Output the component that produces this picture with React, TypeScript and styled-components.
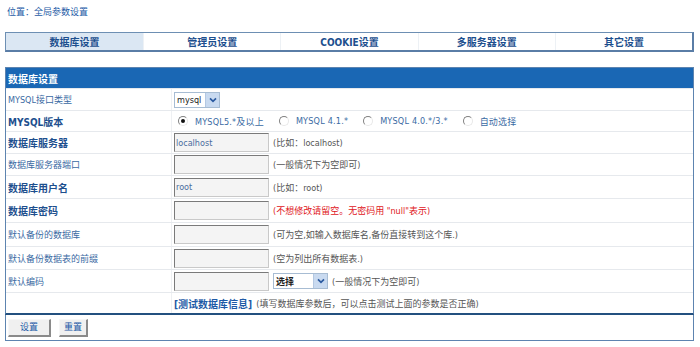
import React from "react";
import styled, { createGlobalStyle, css } from "styled-components";

const Global = createGlobalStyle`
  html, body { margin: 0; padding: 0; background: #fff; }
  body { font-family: "DejaVu Sans Condensed", "DejaVu Sans", "Noto Sans CJK SC", sans-serif; font-size: 9px; }
  * { box-sizing: border-box; }
`;

const Page = styled.div`
  width: 700px;
  padding: 0 6px 0 5px;
`;

const Location = styled.div`
  height: 32px;
  padding: 6px 0 0 2px;
  color: #1d5aa6;
  font-size: 9px;
  line-height: 12px;
`;

const Tabs = styled.div`
  display: grid;
  grid-template-columns: repeat(5, 1fr);
  height: 20px;
  border: 1px solid #6d8fb3;
  border-right-width: 2px;
  border-bottom-width: 2px;
  border-right-color: #5a7da6;
  border-bottom-color: #5a7da6;
`;

const Tab = styled.div<{ $active?: boolean }>`
  display: flex;
  align-items: center;
  justify-content: center;
  font-weight: bold;
  font-size: 10px;
  color: #1d4f8e;
  background: ${(p) => (p.$active ? "#dbe7f3" : "#fff")};
  border-left: 1px solid #edf1f5;
  &:first-child { border-left: none; }
`;

const Panel = styled.div`
  margin-top: 15px;
  border: 1px solid #5d84b0;
  border-bottom: 2px solid #23507f;
`;

const Header = styled.div`
  height: 20px;
  background: #1a67b4;
  color: #fff;
  font-weight: bold;
  font-size: 10px;
  display: flex;
  align-items: center;
  padding-left: 2px;
`;

const Row = styled.div<{ $h?: number }>`
  display: grid;
  grid-template-columns: 166px 1fr;
  height: ${(p) => p.$h ?? 22}px;
  border-top: 1px solid #e6e9ed;
  &:first-of-type { border-top: 1px solid #fff; }
`;

const Label = styled.div<{ $bold?: boolean }>`
  display: flex;
  align-items: center;
  padding-left: 2px;
  border-right: 1px solid #eef0f3;
  ${(p) =>
    p.$bold
      ? css`font-weight: bold; font-size: 10px; color: #1d4f8e;`
      : css`font-size: 9px; color: #3a6aa3;`}
`;

const Value = styled.div<{ $tight?: boolean }>`
  display: flex;
  align-items: center;
  padding-left: ${(p) => (p.$tight ? 6 : 2)}px;
  gap: ${(p) => (p.$tight ? 0 : 4)}px;
  color: #555;
`;

const TextInput = styled.input`
  width: 95px;
  height: 19px;
  border: 1px solid #c9c9c9;
  border-top-color: #7a7a7a;
  border-left-color: #7a7a7a;
  background: #f4f4f4;
  color: #4a6d9e;
  font-family: "DejaVu Sans Condensed", "DejaVu Sans", sans-serif;
  font-size: 9px;
  padding: 0 1px;
  outline: none;
`;

const Select = styled.div<{ $w: number; $bold?: boolean }>`
  width: ${(p) => p.$w}px;
  height: 16px;
  border: 1px solid #a7bcd3;
  display: flex;
  align-items: center;
  justify-content: space-between;
  padding-left: 2px;
  color: #222;
  font-size: 9px;
  font-weight: ${(p) => (p.$bold ? "bold" : "normal")};
  background: #fff;
`;

const SelectBtn = styled.span`
  width: 14px;
  height: 14px;
  background: #c9daf0;
  border-left: 1px solid #b4c8e2;
  display: flex;
  align-items: center;
  justify-content: center;
`;

const Radio = styled.span<{ $checked?: boolean }>`
  width: 10px;
  height: 10px;
  border-radius: 50%;
  border: 1px solid #808080;
  border-right-color: #e8e8e8;
  border-bottom-color: #e8e8e8;
  background: #fff;
  display: inline-flex;
  align-items: center;
  justify-content: center;
  margin: 0 7px 0 0;
  &::after {
    content: "";
    width: 4px;
    height: 4px;
    border-radius: 50%;
    background: ${(p) => (p.$checked ? "#111" : "transparent")};
  }
`;

const RadioLabel = styled.span`
  color: #3a6aa3;
  margin-right: 15px;
  letter-spacing: 0.2px;
`;

const Hint = styled.span<{ $red?: boolean }>`
  color: ${(p) => (p.$red ? "#e0161b" : "#555")};
`;

const TestLink = styled.span`
  color: #1d5aa6;
  font-weight: bold;
  font-size: 10px;
`;

const ButtonBar = styled.div`
  height: 26px;
  border: 1px solid #5d84b0;
  border-top: none;
  display: flex;
  align-items: center;
  gap: 8px;
  padding-left: 2px;
`;

const Button = styled.button<{ $w: number }>`
  width: ${(p) => p.$w}px;
  height: 18px;
  background: #f0f0f0;
  border: 1px solid #f7f7f7;
  border-right: 2px solid #8a8a8a;
  border-bottom: 2px solid #8a8a8a;
  color: #1d5aa6;
  font-family: "Noto Sans CJK SC", sans-serif;
  font-size: 9px;
  padding: 0;
  line-height: 12px;
`;

const Arrow = () => (
  <svg width="8" height="6" viewBox="0 0 8 6">
    <path d="M1 1.3 L4 4.3 L7 1.3" fill="none" stroke="#2c5aa0" strokeWidth="1.7" />
  </svg>
);

export default function App() {
  return (
    <>
      <Global />
      <Page>
        <Location>位置：全局参数设置</Location>
        <Tabs>
          <Tab $active>数据库设置</Tab>
          <Tab>管理员设置</Tab>
          <Tab>COOKIE设置</Tab>
          <Tab>多服务器设置</Tab>
          <Tab>其它设置</Tab>
        </Tabs>
        <Panel>
          <Header>数据库设置</Header>
          <Row $h={22}>
            <Label>MYSQL接口类型</Label>
            <Value>
              <Select $w={46}>
                mysql
                <SelectBtn><Arrow /></SelectBtn>
              </Select>
            </Value>
          </Row>
          <Row $h={21}>
            <Label $bold>MYSQL版本</Label>
            <Value $tight>
              <Radio $checked />
              <RadioLabel>MYSQL5.*及以上</RadioLabel>
              <Radio />
              <RadioLabel>MYSQL 4.1.*</RadioLabel>
              <Radio />
              <RadioLabel>MYSQL 4.0.*/3.*</RadioLabel>
              <Radio />
              <RadioLabel>自动选择</RadioLabel>
            </Value>
          </Row>
          <Row $h={22}>
            <Label $bold>数据库服务器</Label>
            <Value>
              <TextInput defaultValue="localhost" />
              <Hint>(比如：localhost)</Hint>
            </Value>
          </Row>
          <Row $h={22}>
            <Label>数据库服务器端口</Label>
            <Value>
              <TextInput />
              <Hint>(一般情况下为空即可)</Hint>
            </Value>
          </Row>
          <Row $h={23}>
            <Label $bold>数据库用户名</Label>
            <Value>
              <TextInput defaultValue="root" />
              <Hint>(比如：root)</Hint>
            </Value>
          </Row>
          <Row $h={24}>
            <Label $bold>数据库密码</Label>
            <Value>
              <TextInput type="text" />
              <Hint $red>(不想修改请留空。无密码用 "null"表示)</Hint>
            </Value>
          </Row>
          <Row $h={24}>
            <Label>默认备份的数据库</Label>
            <Value>
              <TextInput />
              <Hint>(可为空,如输入数据库名,备份直接转到这个库.)</Hint>
            </Value>
          </Row>
          <Row $h={23}>
            <Label>默认备份数据表的前缀</Label>
            <Value>
              <TextInput />
              <Hint>(空为列出所有数据表.)</Hint>
            </Value>
          </Row>
          <Row $h={23}>
            <Label>默认编码</Label>
            <Value>
              <TextInput />
              <Select $w={55} $bold>
                选择
                <SelectBtn><Arrow /></SelectBtn>
              </Select>
              <Hint>(一般情况下为空即可)</Hint>
            </Value>
          </Row>
          <Row $h={21}>
            <Label />
            <Value>
              <TestLink>[测试数据库信息]</TestLink>
              <Hint>(填写数据库参数后，可以点击测试上面的参数是否正确)</Hint>
            </Value>
          </Row>
        </Panel>
        <ButtonBar>
          <Button $w={43}>设置</Button>
          <Button $w={29}>重置</Button>
        </ButtonBar>
      </Page>
    </>
  );
}
